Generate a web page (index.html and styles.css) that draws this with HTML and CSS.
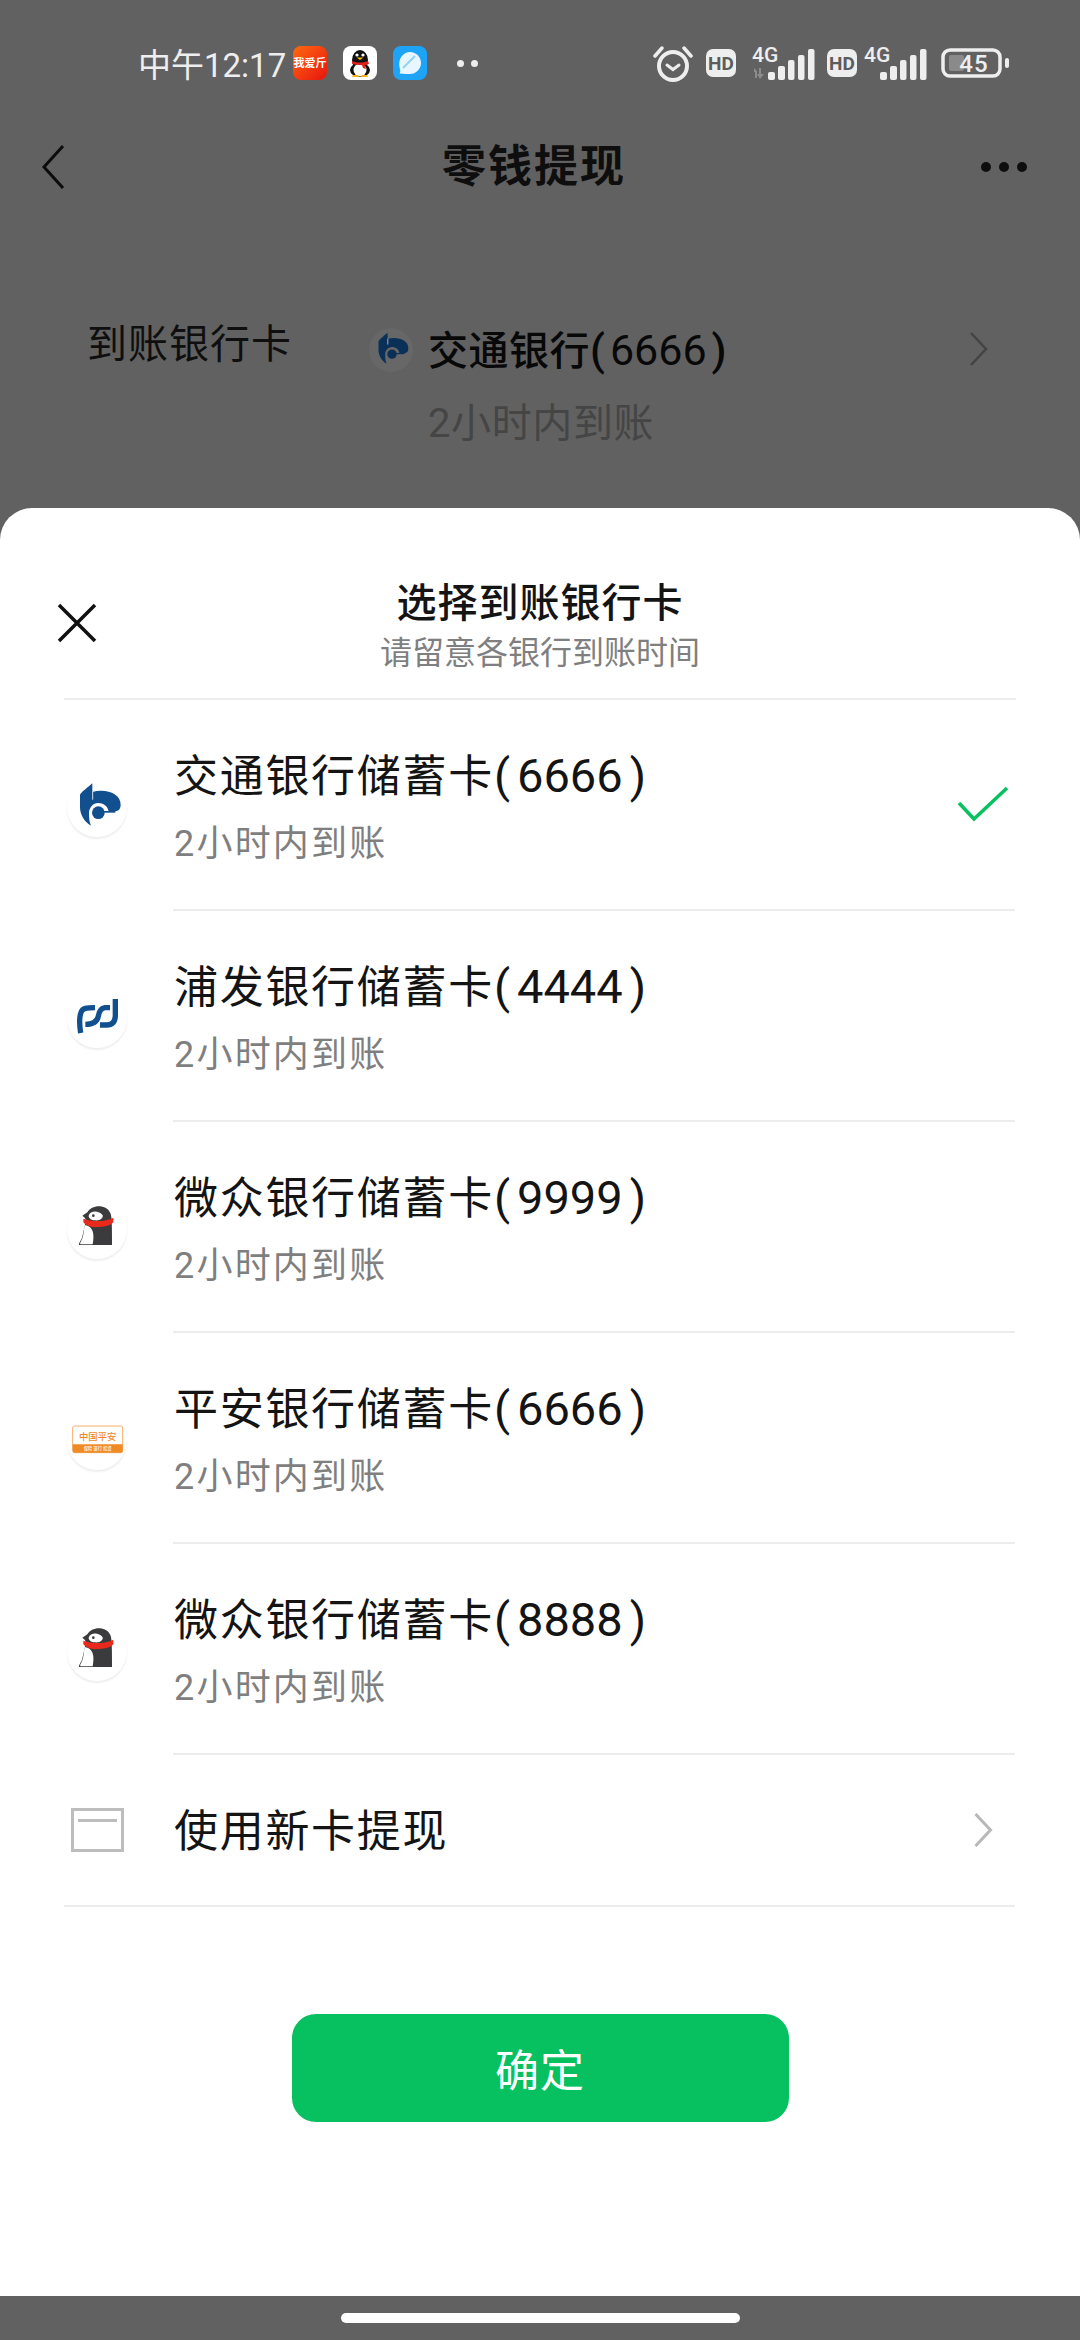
FILE: index.html
```html
<!DOCTYPE html>
<html lang="zh-CN">
<head>
<meta charset="utf-8">
<title>零钱提现</title>
<link rel="stylesheet" href="styles.css">
</head>
<body>
<svg class="defs" width="0" height="0" aria-hidden="true">
  <symbol id="bocom" viewBox="51 48 180 180">
    <path fill="currentColor" d="M90 104C90 99 93 95 127 67V93C165 82 214 96 212 133 211 145 206 150 196 151H176C173 135 160 126 145 126 128 126 117 141 117 157 117 170 118 183 123 194 102 182 90 160 90 138Z"/>
    <path fill="none" stroke="#fff" stroke-width="2.500" d="M128 92V116"/>
    <circle fill="currentColor" cx="145" cy="155" r="19"/>
    <rect fill="currentColor" x="158" y="150" width="38" height="5"/>
  </symbol>
  <symbol id="spd" viewBox="51 51 180 180">
    <g fill="none" stroke="#114f8e" stroke-width="16">
      <path d="M92 186C88 160 88 135 94 122 98 112 108 110 135 110"/>
      <path d="M180 110H165C152 112 147 122 145 135 142 152 130 160 106 160"/>
      <path d="M196 84V132C196 152 188 162 170 162H150"/>
    </g>
  </symbol>
  <symbol id="webank" viewBox="51 54 180 180">
    <path fill="#3b3b3d" d="M97 104 112 94C125 70 170 68 182 98 186 110 186 150 186 192H90C82 192 92 180 96 170L108 118 104 110Z"/>
    <path fill="#fff" d="M116 104C120 90 145 86 158 103 160 112 150 120 134 118 124 117 116 112 116 104Z"/>
    <path fill="#fff" d="M104 132C130 135 134 160 128 190H92C86 188 98 178 100 160Z"/>
    <circle fill="#3b3b3d" cx="130" cy="104" r="4"/>
    <path fill="#e8291c" d="M100 113C125 122 165 124 190 110L190 124C178 136 160 138 142 138 125 140 108 134 100 124Z"/>
  </symbol>
  <symbol id="qq" viewBox="0 0 34 34">
    <rect width="34" height="34" rx="8" fill="#fff"/>
    <ellipse cx="17" cy="14" rx="8" ry="10" fill="#111"/>
    <ellipse cx="17" cy="24" rx="10" ry="7" fill="#111"/>
    <ellipse cx="17" cy="24" rx="6.500" ry="6.500" fill="#fff"/>
    <circle cx="14" cy="9" r="1.600" fill="#fff"/><circle cx="20" cy="9" r="1.600" fill="#fff"/>
    <path fill="#f5b20a" d="M13.500 11.500h7l-3.500 2.500zM9 31h7l-1-2H10zM18 31h7l-1-2h-5z"/>
    <path fill="#e0201a" d="M9 15c5 2 11 2 16 0l1 2.500c-1 1-3 1.500-4 1.500l1 4-3-1-1-3c-4 0-8 0-10-1.500z"/>
  </symbol>
  <symbol id="bars" viewBox="0 0 47 31">
    <rect x="0" y="23" width="7" height="8" rx="2" fill="#eee"/>
    <rect x="10" y="17" width="7" height="14" rx="2" fill="#eee"/>
    <rect x="20" y="11" width="6.500" height="20" rx="2" fill="#eee"/>
    <rect x="30" y="6" width="6.500" height="25" rx="2" fill="#eee"/>
    <rect x="40" y="0" width="6.500" height="31" rx="2" fill="#eee"/>
  </symbol>
</svg>

<main class="behind">
  <header class="status">
    <span class="clock">中午12:17</span>
    <span class="apps">
      <svg class="app" viewBox="0 0 34 34"><defs><linearGradient id="red" x1="0" y1="0" x2="1" y2="1"><stop offset="0" stop-color="#ff6a10"/><stop offset="1" stop-color="#e8140e"/></linearGradient></defs><rect width="34" height="34" rx="8" fill="url(#red)"/><text x="17" y="21" class="app-text">我爱斤</text></svg>
      <svg class="app"><use href="#qq"/></svg>
      <svg class="app" viewBox="0 0 34 34"><rect width="34" height="34" rx="8" fill="#1ea4f7"/><path fill="#e8f6ff" d="M17 6C23.500 6 28 11 28 17 28 23 23 28 17 28 14 28 11 28 6.500 27.500 8 25.500 7 24 6.500 21 5 13 10 6 17 6Z"/><path fill="none" stroke="#8fd2fb" stroke-width="2" d="M10 22 22 10"/></svg>
      <i class="dot"></i><i class="dot"></i>
    </span>
    <span class="sys">
      <svg class="alarm" viewBox="0 0 40 37"><g fill="none" stroke="#eee" stroke-linecap="round"><circle cx="20" cy="21" r="14" stroke-width="4"/><path stroke-width="3.500" d="M2 11 9 3M38 11 31 3"/><path stroke-width="3" d="M14 20l6 4.500 6-4.500"/></g></svg>
      <svg class="hd" viewBox="0 0 30 28"><rect width="30" height="28" rx="7" fill="#eee"/><text x="15" y="20.500" class="hd-text">HD</text></svg>
      <svg class="signal" viewBox="0 -6 66 49"><text x="3" y="17" class="g-text">4G</text><path fill="#8c8c8c" d="M0 27h5v-4l3 3v7H6v-6zM10 23h2v6h3l-4 5-3-5h2z"/><use href="#bars" x="19" y="4" width="47" height="31"/></svg>
      <svg class="hd" viewBox="0 0 30 28"><rect width="30" height="28" rx="7" fill="#eee"/><text x="15" y="20.500" class="hd-text">HD</text></svg>
      <svg class="signal signal-2" viewBox="0 -6 66 49"><text x="3" y="17" class="g-text">4G</text><use href="#bars" x="19" y="4" width="47" height="31"/></svg>
      <svg class="battery" viewBox="0 0 68 30"><rect x="2" y="2" width="57" height="26" rx="7" fill="none" stroke="#eee" stroke-width="3.500"/><rect x="8" y="7" width="15" height="16" rx="2" fill="#8a8a8a"/><text x="33" y="24" class="bat-text">45</text><rect x="64" y="10" width="4" height="10" rx="2" fill="#eee"/></svg>
    </span>
  </header>

  <nav class="nav">
    <svg class="back" viewBox="0 0 24 44"><path d="M22 1 3 22l19 21" fill="none" stroke="#0c0c0c" stroke-width="3"/></svg>
    <h1 class="nav-title">零钱提现</h1>
    <span class="more"><i></i><i></i><i></i></span>
  </nav>

  <section class="dest">
    <span class="dest-label">到账银行卡</span>
    <span class="dest-logo"><svg class="dest-mark"><use href="#bocom"/></svg></span>
    <div class="dest-info">
      <div class="dest-name">交通银行<span class="num">(<span class="num-in">6666</span>)</span></div>
      <div class="dest-time">2小时内到账</div>
    </div>
    <svg class="dest-arrow" viewBox="0 0 18 34"><path d="M1 1l15 16L1 33" fill="none" stroke="#444" stroke-width="2.500"/></svg>
  </section>
</main>

<section class="sheet">
  <header class="sheet-head">
    <svg class="close" viewBox="0 0 40 40"><path d="M2 2l36 36M38 2 2 38" fill="none" stroke="#111" stroke-width="3.500"/></svg>
    <div class="sheet-titles">
      <div class="sheet-title">选择到账银行卡</div>
      <div class="sheet-sub">请留意各银行到账时间</div>
    </div>
  </header>

  <ul class="list">
    <li class="row">
      <span class="logo"><svg class="mark"><use href="#bocom"/></svg></span>
      <div class="row-body">
        <div class="row-text"><div class="row-name">交通银行储蓄卡<span class="tail">(<span class="digits">6666</span>)</span></div><div class="row-time">2小时内到账</div></div>
        <svg class="check" viewBox="0 0 52 36"><path d="M2 17l15 16L50 2" fill="none" stroke="#07c160" stroke-width="3.500"/></svg>
      </div>
    </li>
    <li class="row">
      <span class="logo"><svg class="mark"><use href="#spd"/></svg></span>
      <div class="row-body"><div class="row-text"><div class="row-name">浦发银行储蓄卡<span class="tail">(<span class="digits">4444</span>)</span></div><div class="row-time">2小时内到账</div></div></div>
    </li>
    <li class="row">
      <span class="logo"><svg class="mark"><use href="#webank"/></svg></span>
      <div class="row-body"><div class="row-text"><div class="row-name">微众银行储蓄卡<span class="tail">(<span class="digits">9999</span>)</span></div><div class="row-time">2小时内到账</div></div></div>
    </li>
    <li class="row">
      <span class="logo"><svg class="mark" viewBox="51 57 180 180"><rect x="68" y="105" width="150" height="80" rx="6" fill="#fff" stroke="#f4b06a" stroke-width="3"/><path fill="#f08a24" d="M68 160H218V179A6 6 0 0 1 212 185H74A6 6 0 0 1 68 179Z"/><text x="143" y="146" class="pa-main">中国平安</text><text x="143" y="178" class="pa-sub">保险 银行 投资</text></svg></span>
      <div class="row-body"><div class="row-text"><div class="row-name">平安银行储蓄卡<span class="tail">(<span class="digits">6666</span>)</span></div><div class="row-time">2小时内到账</div></div></div>
    </li>
    <li class="row">
      <span class="logo"><svg class="mark"><use href="#webank"/></svg></span>
      <div class="row-body"><div class="row-text"><div class="row-name">微众银行储蓄卡<span class="tail">(<span class="digits">8888</span>)</span></div><div class="row-time">2小时内到账</div></div></div>
    </li>
    <li class="new-card">
      <svg class="card" viewBox="0 0 53 44"><rect x="1.500" y="1.500" width="50" height="41" fill="none" stroke="#bdbdbd" stroke-width="3"/><rect x="7" y="11" width="39" height="3" fill="#bdbdbd"/></svg>
      <span class="new-label">使用新卡提现</span>
      <svg class="new-arrow" viewBox="0 0 19 34"><path d="M1.500 1l15 16-15 16" fill="none" stroke="#b8b8b8" stroke-width="3"/></svg>
    </li>
  </ul>

  <button class="confirm">确定</button>
</section>

<footer class="gesture"><span class="home"></span></footer>
</body>
</html>
```
FILE: styles.css
```css
* { box-sizing: border-box; }
html, body { margin: 0; padding: 0; }
body {
  width: 1080px;
  height: 2340px;
  overflow: hidden;
  display: flex;
  flex-direction: column;
  background: #616161;
  font-family: Roboto, "Noto Sans CJK SC", sans-serif;
  color: #141414;
}
.defs { position: absolute; }
i { display: block; }

.behind { flex: 1; min-height: 0; }

.status {
  height: 126px;
  display: flex;
  align-items: center;
  padding-left: 138px;
  padding-right: 71px;
}
.clock { font-size: 33px; color: #eee; width: 155px; white-space: nowrap; }
.apps { display: flex; align-items: center; gap: 16px; }
.app { width: 34px; height: 34px; display: block; }
.app-text { font: 700 11px "Noto Sans CJK SC", sans-serif; fill: #fff; text-anchor: middle; }
.dot { width: 7px; height: 7px; border-radius: 50%; background: #eee; margin-left: 14px; }
.dot + .dot { margin-left: -9px; }
.sys { margin-left: auto; display: flex; align-items: center; }
.alarm { width: 40px; height: 37px; margin-right: 13px; }
.hd { width: 30px; height: 28px; }
.hd-text { font: 700 19px Roboto, sans-serif; fill: #5c5c5c; text-anchor: middle; }
.signal { width: 66px; height: 49px; margin-left: 13px; margin-right: 12px; }
.signal-2 { margin-left: 4px; margin-right: 14px; }
.g-text { font: 500 21px Roboto, sans-serif; fill: #eee; }
.battery { width: 68px; height: 30px; }
.bat-text { font: 500 24px Roboto, sans-serif; fill: #eee; text-anchor: middle; letter-spacing: 1px; }

.nav {
  height: 82px;
  display: grid;
  grid-template-columns: 1fr auto 1fr;
  align-items: center;
  padding: 0 53px 0 41px;
}
.back { width: 24px; height: 44px; }
.nav-title { margin: 0; font-size: 44px; font-weight: 700; letter-spacing: 2px; color: #0e0e0e; line-height: 60px; }
.more { justify-self: end; display: flex; gap: 8px; }
.more i { width: 10px; height: 10px; border-radius: 50%; background: #0e0e0e; }

.dest { margin-top: 112px; padding: 0 92px 0 87px; display: flex; align-items: flex-start; }
.dest-label { width: 282px; font-size: 40px; line-height: 50px; letter-spacing: 1px; color: #0f0f0f; }
.dest-logo { width: 44px; height: 44px; margin-top: 8px; border-radius: 50%; background: #676767; display: flex; align-items: center; justify-content: center; color: #0a3058; }
.dest-mark { width: 44px; height: 44px; }
.dest-info { margin-left: 15px; flex: 1; }
.dest-name { font-size: 40px; line-height: 60px; font-weight: 500; letter-spacing: 0.5px; color: #080808; }
.num { font-size: 43px; letter-spacing: 0; }
.num-in { margin: 0 5px; font-weight: 400; }
.dest-time { margin-top: 17px; font-size: 40px; line-height: 50px; letter-spacing: 0.6px; color: #454545; }
.dest-arrow { width: 18px; height: 34px; margin-top: 12px; }

.sheet {
  height: 1788px;
  background: #fff;
  border-radius: 32px 32px 0 0;
  display: flex;
  flex-direction: column;
}
.sheet-head {
  margin: 0 64px;
  height: 192px;
  padding-top: 70px;
  border-bottom: 2px solid #ececec;
  display: grid;
  grid-template-columns: 1fr auto 1fr;
  align-items: start;
}
.close { width: 40px; height: 40px; margin: 25px 0 0 -7px; }
.sheet-titles { text-align: center; }
.sheet-title { font-size: 40px; line-height: 52px; font-weight: 500; letter-spacing: 1px; color: #141414; }
.sheet-sub { margin-top: 1px; font-size: 32px; line-height: 44px; color: #7f7f7f; }

.list { list-style: none; margin: 0 65px 0 64px; padding: 0; }
.row { display: flex; height: 211px; }
.logo {
  width: 60px;
  height: 60px;
  flex: none;
  margin: 77px 46px 0 3px;
  border-radius: 50%;
  background: #fff;
  box-shadow: 0 2px 2px rgba(0, 0, 0, 0.07);
  color: #114f8e;
  display: block;
}
.mark { width: 60px; height: 60px; display: block; }
.row-body { flex: 1; display: flex; justify-content: space-between; border-bottom: 2px solid #ececec; }
.row-text { padding: 47px 0 0 1px; }
.row-name { font-size: 44px; line-height: 60px; letter-spacing: 1.7px; color: #141414; }
.tail { font-size: 47px; letter-spacing: 0; line-height: 40px; }
.digits { margin: 0 7px; }
.row-time { margin-top: 12px; font-size: 36px; line-height: 50px; letter-spacing: 2.2px; color: #7f7f7f; }
.check { width: 52px; height: 36px; margin: 86px 6px 0 0; }

.pa-main { font: 500 28px "Noto Sans CJK SC", sans-serif; fill: #ee8a2c; text-anchor: middle; }
.pa-sub { font: 500 13px "Noto Sans CJK SC", sans-serif; fill: #fff; text-anchor: middle; }

.new-card {
  height: 152px;
  display: flex;
  align-items: center;
  border-bottom: 2px solid #ececec;
  padding: 0 22px 0 7px;
}
.card { width: 53px; height: 44px; margin-right: 50px; }
.new-label { flex: 1; margin-top: 3px; font-size: 44px; line-height: 60px; letter-spacing: 1.7px; color: #141414; }
.new-arrow { width: 19px; height: 34px; }

.confirm {
  align-self: center;
  margin-top: 107px;
  width: 497px;
  height: 108px;
  border: 0;
  border-radius: 24px;
  background: #07c160;
  color: #fff;
  font-family: inherit;
  font-size: 44px;
  letter-spacing: 1px;
  font-weight: 400;
}

.gesture { height: 44px; padding-top: 17px; display: flex; justify-content: center; }
.home { width: 399px; height: 10px; border-radius: 5px; background: #fff; }
```
